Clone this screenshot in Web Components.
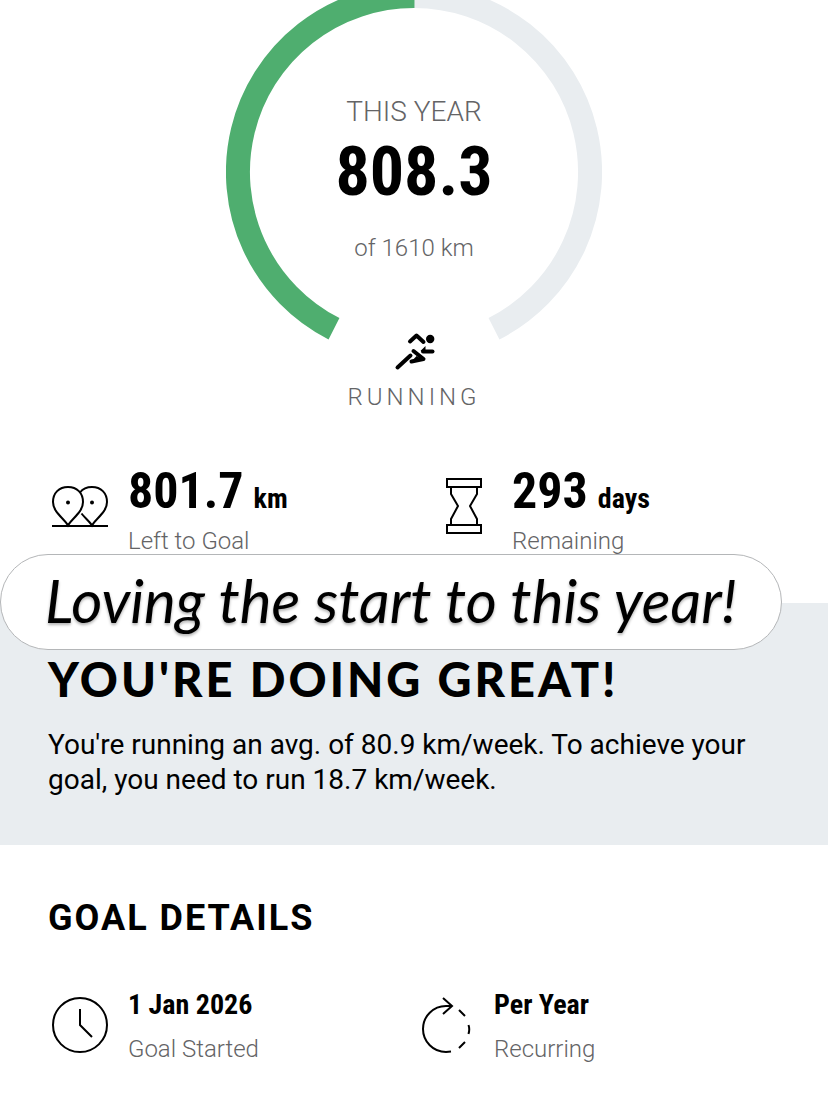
<!DOCTYPE html>
<html lang="en">
<head>
  <meta charset="UTF-8">
  <meta name="viewport" content="width=device-width, initial-scale=1.0">
  <title>Running goal</title>
  <style>
    body {
      margin: 0;
      background: #fff;
      color: #000;
      font-family: Roboto, "Open Sans", sans-serif;
      --muted: #646466;
      --panel: #e9edf0;
      --progress: #4fae6f;
      --condensed: "Roboto Condensed", "Open Sans Condensed", "DejaVu Sans Condensed", sans-serif;
    }
  </style>
</head>
<body>
  <goal-page>
    <goal-gauge period="This year" value="808.3" target="of 1610 km" sport="Running"></goal-gauge>

    <goal-row class="stats" wide>
      <goal-stat value="801.7" unit="km" label="Left to Goal" large>
        <svg width="64" height="64" viewBox="0 0 64 64" fill="none" stroke="#000" stroke-width="2" aria-hidden="true">
          <path d="M4 51H60"/>
          <path d="M20 50.500C16 43.500 5 37 5 27C5 18 11 12 20 12C29 12 35 18 35 27C35 37 24 43.500 20 50.500Z"/>
          <path d="M32 17.500C35 13.500 39 12 44 12C53 12 59 18 59 27C59 37 48 43.500 44 50.500C41.500 46.500 37 43 33.500 38.500"/>
          <circle cx="20" cy="27.500" r="2" fill="#000" stroke="none"/>
          <circle cx="44" cy="27.500" r="2" fill="#000" stroke="none"/>
        </svg>
      </goal-stat>
      <goal-stat value="293" unit="days" label="Remaining" large>
        <svg width="64" height="64" viewBox="0 0 64 64" fill="none" stroke="#000" stroke-width="2" aria-hidden="true">
          <rect x="15" y="4" width="34" height="8"/>
          <rect x="15" y="50" width="34" height="8"/>
          <path d="M19 12V19L26 31L19 44V50M45 12V19L38 31L45 44V50"/>
        </svg>
      </goal-stat>
    </goal-row>

    <goal-banner heading="You're doing great!">
      <goal-note slot="note">Loving the start to this year!</goal-note>
      You're running an avg. of 80.9 km/week. To achieve your goal, you need to run 18.7 km/week.
    </goal-banner>

    <goal-details heading="Goal details">
      <goal-row>
        <goal-stat value="1 Jan 2026" label="Goal Started">
          <svg width="64" height="64" viewBox="0 0 64 64" fill="none" stroke="#000" stroke-width="2" aria-hidden="true">
            <circle cx="32" cy="32" r="27"/>
            <path d="M32 16V32L44 44"/>
          </svg>
        </goal-stat>
        <goal-stat value="Per Year" label="Recurring">
          <svg width="64" height="64" viewBox="0 0 64 64" fill="none" stroke="#000" stroke-width="2" aria-hidden="true">
            <path d="M37 13H32A23 23 0 0 0 32 59L37 58.500"/>
            <path d="M29 5L38 13L29 21"/>
            <path d="M45 17L51 23M54.500 32Q56 36 54.500 41M51 49L45 55"/>
          </svg>
        </goal-stat>
      </goal-row>
    </goal-details>
  </goal-page>

  <script>
    class GoalPage extends HTMLElement {
      constructor() {
        super();
        this.attachShadow({ mode: "open" });
        this.shadowRoot.innerHTML = `
          <style>
            :host {
              display: block;
            }
            main {
              display: flex;
              flex-direction: column;
            }
            ::slotted(.stats) {
              padding: 48px;
            }
          </style>
          <main><slot></slot></main>
        `;
      }
    }
    customElements.define("goal-page", GoalPage);

    class GoalGauge extends HTMLElement {
      constructor() {
        super();
        this.attachShadow({ mode: "open" });
      }
      connectedCallback() {
        this.shadowRoot.innerHTML = `
          ${this.getStyles()}
          <svg class="ring" width="376" height="340" viewBox="0 16 376 340" fill="none" stroke-width="24" aria-hidden="true">
            <path class="rest" d="M188 12A176 176 0 0 1 268 344.800"/>
            <path class="done" d="M188.500 12A176 176 0 0 0 108 344.800"/>
          </svg>
          <div class="readout">
            <p class="period">${this.getAttribute("period")}</p>
            <p class="value">${this.getAttribute("value")}</p>
            <p class="target">${this.getAttribute("target")}</p>
            <svg class="runner" width="44" height="40" viewBox="0 0 44 40" fill="none" stroke="#000" stroke-width="4" stroke-linecap="round" stroke-linejoin="round" aria-hidden="true">
              <path d="M18 9.500L24.500 3.500L31.500 10"/>
              <circle cx="38.200" cy="7" r="4.200" fill="#000" stroke="none"/>
              <path d="M31 19.500H40.500"/>
              <path d="M28.500 19L33.500 14V20Z" fill="#000" stroke="none"/>
              <path d="M5.500 35.500L18.500 23.500"/>
              <path d="M21.500 19L31.500 27L19.500 29.500"/>
              <path d="M20 29L24.500 24L30 27Z" fill="#000" stroke="none"/>
            </svg>
            <p class="sport">${this.getAttribute("sport")}</p>
          </div>
        `;
      }
      getStyles() {
        return `
          <style>
            :host {
              display: grid;
              justify-items: center;
            }
            .ring, .readout {
              grid-area: 1 / 1;
            }
            .rest {
              stroke: var(--panel);
            }
            .done {
              stroke: var(--progress);
            }
            .readout {
              display: flex;
              flex-direction: column;
              align-items: center;
              padding-top: 96px;
            }
            p {
              margin: 0;
              color: var(--muted);
              font-size: 24px;
              line-height: 28px;
              font-weight: 300;
            }
            .period {
              font-size: 28px;
              line-height: 32px;
              text-transform: uppercase;
            }
            .value {
              margin: 4px 0 22px;
              color: #000;
              font: bold 68px/80px var(--condensed);
            }
            .runner {
              margin: 70px 0 11px;
            }
            .sport {
              letter-spacing: 4px;
              text-transform: uppercase;
            }
          </style>
        `;
      }
    }
    customElements.define("goal-gauge", GoalGauge);

    class GoalRow extends HTMLElement {
      constructor() {
        super();
        this.attachShadow({ mode: "open" });
        this.shadowRoot.innerHTML = `
          <style>
            :host {
              display: grid;
              grid-template-columns: 1fr 1fr;
            }
            :host([wide]) {
              column-gap: 36px;
            }
          </style>
          <slot></slot>
        `;
      }
    }
    customElements.define("goal-row", GoalRow);

    class GoalStat extends HTMLElement {
      constructor() {
        super();
        this.attachShadow({ mode: "open" });
      }
      connectedCallback() {
        const unit = this.getAttribute("unit");
        this.shadowRoot.innerHTML = `
          <style>
            :host {
              display: flex;
              align-items: center;
              gap: 16px;
            }
            ::slotted(svg) {
              flex: none;
            }
            .text {
              display: flex;
              flex-direction: column;
              gap: 12px;
            }
            p {
              margin: 0;
            }
            .value {
              font: bold 28px/36px var(--condensed);
            }
            .label {
              color: var(--muted);
              font-size: 24px;
              line-height: 28px;
              font-weight: 300;
            }
            .unit {
              font-size: 28px;
              line-height: 36px;
            }
            :host([large]) .text {
              gap: 4px;
            }
            :host([large]) .value {
              display: flex;
              align-items: baseline;
              gap: 10px;
              font-size: 50px;
              line-height: 64px;
            }
          </style>
          <slot></slot>
          <div class="text">
            <p class="value">${this.getAttribute("value")}${unit ? ` <span class="unit">${unit}</span>` : ""}</p>
            <p class="label">${this.getAttribute("label")}</p>
          </div>
        `;
      }
    }
    customElements.define("goal-stat", GoalStat);

    class GoalBanner extends HTMLElement {
      constructor() {
        super();
        this.attachShadow({ mode: "open" });
      }
      connectedCallback() {
        this.shadowRoot.innerHTML = `
          <style>
            :host {
              display: block;
              position: relative;
              padding: 48px;
              background: var(--panel);
            }
            /* the note hangs over the top edge of the panel */
            ::slotted([slot="note"]) {
              position: absolute;
              left: 0;
              top: -49px;
            }
            h1 {
              margin: 0 0 20px;
              font: 900 47px/56px Lato, sans-serif;
              letter-spacing: 3px;
              text-transform: uppercase;
            }
            p {
              margin: 0;
              font-size: 28px;
              line-height: 35px;
            }
          </style>
          <slot name="note"></slot>
          <h1>${this.getAttribute("heading")}</h1>
          <p><slot></slot></p>
        `;
      }
    }
    customElements.define("goal-banner", GoalBanner);

    class GoalNote extends HTMLElement {
      constructor() {
        super();
        this.attachShadow({ mode: "open" });
        this.shadowRoot.innerHTML = `
          <style>
            :host {
              display: block;
              box-sizing: border-box;
              padding: 12px 44px 16px;
              border: 1px solid #b4b6b8;
              border-radius: 48px;
              background: #fff;
              font: italic 60px/66px Lato, sans-serif;
              text-shadow: 0 2px 3px rgba(0, 0, 0, .3);
              white-space: nowrap;
            }
          </style>
          <slot></slot>
        `;
      }
    }
    customElements.define("goal-note", GoalNote);

    class GoalDetails extends HTMLElement {
      constructor() {
        super();
        this.attachShadow({ mode: "open" });
      }
      connectedCallback() {
        this.shadowRoot.innerHTML = `
          <style>
            :host {
              display: block;
              padding: 48px 48px 40px;
            }
            h2 {
              margin: 0 0 44px;
              font-size: 36px;
              line-height: 50px;
              font-weight: 700;
              letter-spacing: 2px;
              text-transform: uppercase;
            }
          </style>
          <h2>${this.getAttribute("heading")}</h2>
          <slot></slot>
        `;
      }
    }
    customElements.define("goal-details", GoalDetails);
  </script>
</body>
</html>
